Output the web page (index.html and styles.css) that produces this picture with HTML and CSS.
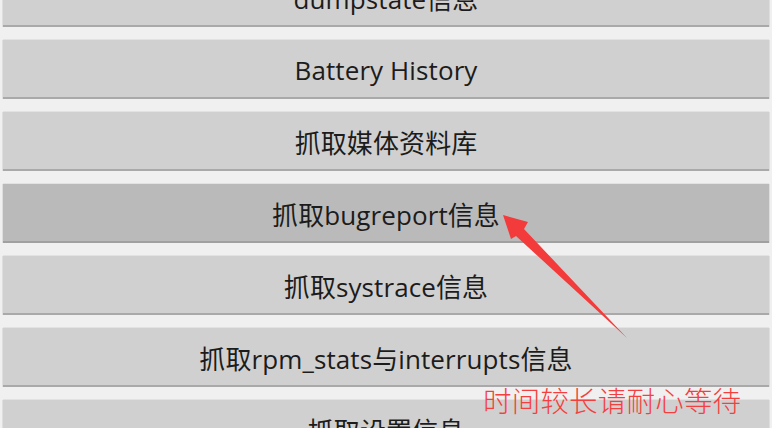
FILE: index.html
```html
<!DOCTYPE html>
<html lang="zh-CN">
<head>
<meta charset="utf-8">
<title>Tools</title>
<link rel="stylesheet" href="styles.css">
</head>
<body>
<div class="screen">
  <div class="list">
    <div class="btn">dumpstate信息</div>
    <div class="btn">Battery History</div>
    <div class="btn">抓取媒体资料库</div>
    <div class="btn pressed">抓取bugreport信息</div>
    <div class="btn">抓取systrace信息</div>
    <div class="btn">抓取rpm_stats与interrupts信息</div>
    <div class="btn">抓取设置信息</div>
  </div>
  <svg class="arrow" width="772" height="428" viewBox="0 0 772 428">
    <polygon points="503,215 528,222 524,229 627,338 516,236 511,239" fill="#f43b3b"/>
  </svg>
  <div class="note">时间较长请耐心等待</div>
</div>
</body>
</html>
```
FILE: styles.css
```css
html, body {
  margin: 0;
  padding: 0;
}
body {
  background: #f0f0f0;
  overflow: hidden;
  width: 772px;
  height: 428px;
}
.screen {
  position: relative;
  width: 772px;
  height: 428px;
  overflow: hidden;
}
.list {
  display: flex;
  flex-direction: column;
  gap: 13px;
  padding: 0 3px;
  margin-top: -32px;
}
.btn {
  height: 55px;
  padding-top: 2px;
  background: #d0d0d0;
  border-bottom: 2px solid #a9a9a9;
  box-shadow: 0 -1px 0 #e2e2e2, 1px 0 0 #dedede, -1px 0 0 #dedede;
  display: flex;
  align-items: center;
  justify-content: center;
  font-family: "Open Sans", "Noto Sans CJK SC", sans-serif;
  font-size: 26px;
  letter-spacing: 0.1px;
  color: #1c1c1c;
  white-space: nowrap;
}
.btn.pressed {
  background: #bababa;
  border-bottom-color: #a0a0a0;
}
.arrow {
  position: absolute;
  left: 0;
  top: 0;
}
.note {
  position: absolute;
  left: 483px;
  top: 384px;
  font-family: "Noto Sans CJK SC", sans-serif;
  font-size: 28.5px;
  line-height: 32px;
  letter-spacing: 0.2px;
  color: #f53f3f;
  font-weight: 300;
}
```
